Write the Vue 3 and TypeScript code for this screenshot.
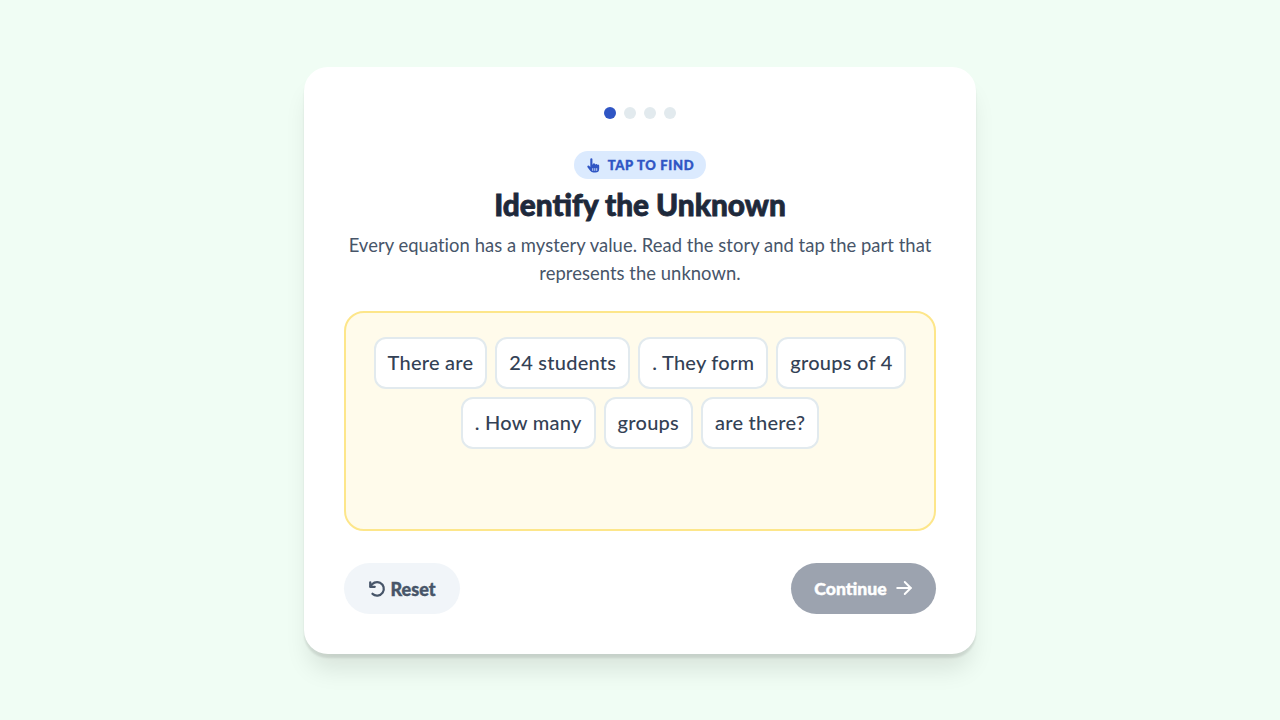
<script setup lang="ts">
const dots = [true, false, false, false]
const row1 = ['There are', '24 students', '. They form', 'groups of 4']
const row2 = ['. How many', 'groups', 'are there?']
</script>

<template>
  <main class="page">
    <section class="card">
      <div class="dots">
        <span v-for="(d, i) in dots" :key="i" class="dot" :class="{ on: d }"></span>
      </div>
      <div class="badge">
        <svg width="15" height="15" viewBox="0 0 14 14" fill="#2f55c4">
          <path d="M4 1.200a1 1 0 0 1 2 0V6h.5V5.600a1 1 0 0 1 1.900 0V6h.3a1 1 0 0 1 1.800.3h.2a1 1 0 0 1 1.600.9V10a3.600 3.600 0 0 1-3.600 3.600H7A3.800 3.800 0 0 1 3.900 12L1.400 8.600a1 1 0 0 1 1.500-1.300L4 8.300z"/>
          <path d="M6.300 9.500v2.500M8.200 9.500v2.500M10 9.500v2.500" stroke="#dbe8fd" stroke-width=".8"/>
        </svg>
        <span>TAP TO FIND</span>
      </div>
      <h1 class="title">Identify the Unknown</h1>
      <p class="desc">Every equation has a mystery value. Read the story and tap the part that represents the unknown.</p>
      <div class="story">
        <div class="row">
          <button v-for="t in row1" :key="t" class="chip">{{ t }}</button>
        </div>
        <div class="row">
          <button v-for="t in row2" :key="t" class="chip">{{ t }}</button>
        </div>
      </div>
      <div class="actions">
        <button class="btn reset">
          <svg width="18" height="18" viewBox="0 0 24 24" fill="none" stroke="#475569" stroke-width="3" stroke-linecap="round" stroke-linejoin="round">
            <path d="M3 3v6h6"/>
            <path d="M3.500 9A9 9 0 1 1 6 18.400"/>
          </svg>
          Reset
        </button>
        <button class="btn next">
          Continue
          <svg class="arrow" width="18" height="18" viewBox="0 0 24 24" fill="none" stroke="#fff" stroke-width="2.600" stroke-linecap="round" stroke-linejoin="round">
            <path d="M3 12h18"/>
            <path d="M13 4l8 8-8 8"/>
          </svg>
        </button>
      </div>
    </section>
  </main>
</template>

<style scoped>
.page {
  width: 1280px;
  height: 720px;
  background: #f0fdf4;
  display: flex;
  align-items: center;
  justify-content: center;
  font-family: Lato, "Noto Sans", sans-serif;
  padding-top: 1px;
  box-sizing: border-box;
}
.card {
  width: 672px;
  height: 587px;
  box-sizing: border-box;
  padding: 40px;
  background: #fff;
  border-radius: 24px;
  box-shadow: 0 4px 2px rgba(0, 0, 0, 0.09), 0 20px 25px -5px rgba(0, 0, 0, 0.1);
  display: flex;
  flex-direction: column;
  align-items: center;
}
.dots {
  display: flex;
  gap: 8px;
  margin-bottom: 32px;
}
.dot {
  width: 12px;
  height: 12px;
  border-radius: 50%;
  background: #e2eaee;
}
.dot.on {
  background: #2f55c4;
}
.badge {
  height: 28px;
  width: 132px;
  border-radius: 14px;
  background: #dbeafe;
  color: #2f55c4;
  font-size: 13px;
  font-weight: 900;
  letter-spacing: 0.7px;
  -webkit-text-stroke: 0.4px currentColor;
  display: flex;
  align-items: center;
  justify-content: center;
  gap: 7px;
}
.title {
  margin: 8px 0 8px;
  font-size: 29.800px;
  line-height: 36px;
  font-weight: 900;
  -webkit-text-stroke: 0.8px currentColor;
  color: #1e293b;
}
.desc {
  margin: 0 0 24px;
  width: 592px;
  text-align: center;
  font-size: 18.400px;
  letter-spacing: 0.05px;
  line-height: 28px;
  color: #475569;
}
.story {
  width: 592px;
  height: 220px;
  flex-shrink: 0;
  box-sizing: border-box;
  padding: 24px;
  border: 2px solid #fde68a;
  border-radius: 20px;
  background: #fffbeb;
  display: flex;
  flex-direction: column;
  gap: 8px;
}
.row {
  display: flex;
  justify-content: center;
  gap: 8px;
}
.chip {
  height: 52px;
  padding: 0 12px 2px;
  background: #fff;
  border: 2px solid #e2eaee;
  border-radius: 12px;
  font: 500 20px Lato, "Noto Sans", sans-serif;
  letter-spacing: 0.25px;
  color: #334155;
}
.actions {
  width: 100%;
  display: flex;
  justify-content: space-between;
  margin-top: 32px;
}
.btn {
  height: 51px;
  border: 0;
  border-radius: 26px;
  font: 900 18px Lato, "Noto Sans", sans-serif;
  -webkit-text-stroke: 0.4px currentColor;
  display: flex;
  align-items: center;
  gap: 4px;
}
.reset {
  width: 116px;
  justify-content: center;
  background: #f1f5f9;
  color: #475569;
}
.next {
  width: 145px;
  justify-content: center;
  gap: 8px;
  background: #9ca3af;
  color: #fff;
  font-size: 17.600px;
}
.arrow {
  margin-bottom: 2px;
}
</style>
